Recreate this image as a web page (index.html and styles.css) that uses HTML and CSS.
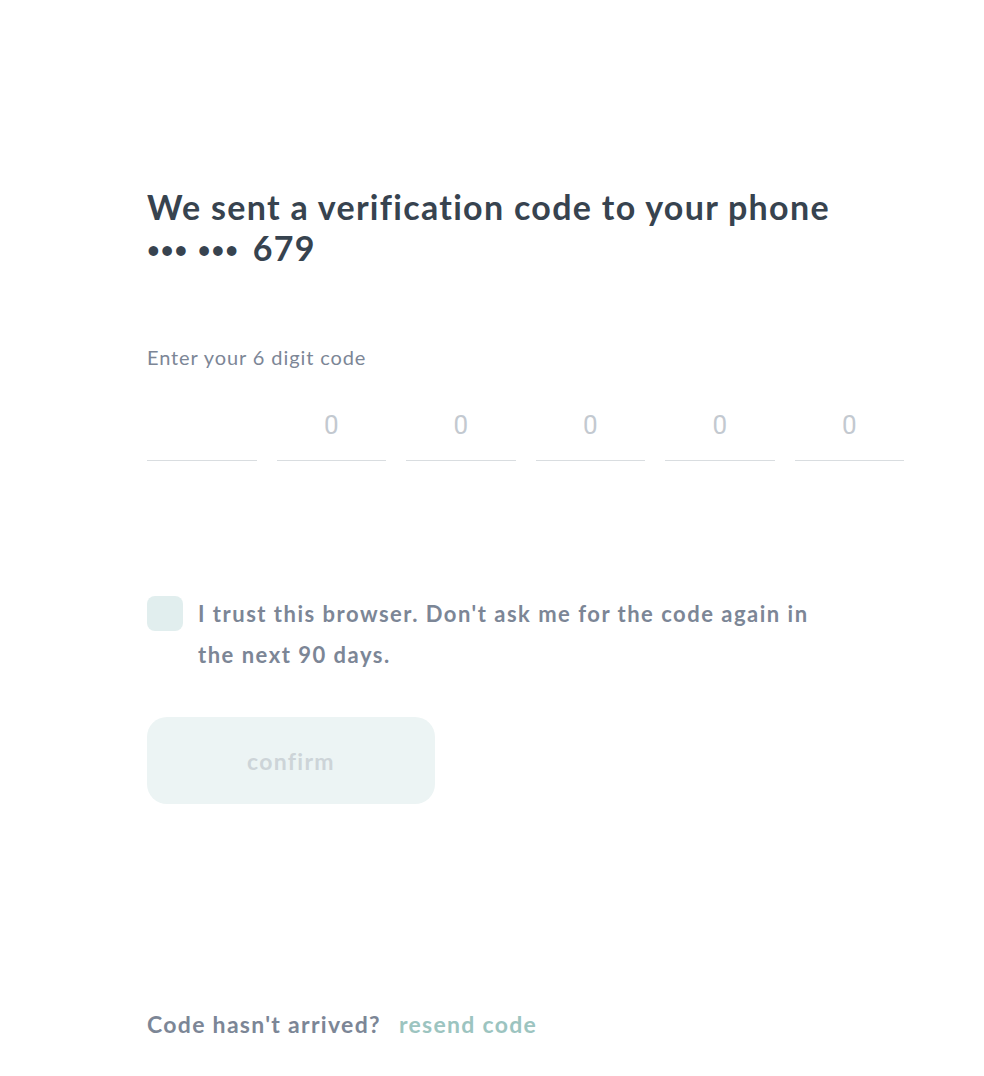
FILE: index.html
```html
<!DOCTYPE html>
<html lang="en">
<head>
<meta charset="utf-8">
<title>Verify</title>
<link rel="stylesheet" href="styles.css">
</head>
<body>
<main class="page">
  <h1 class="title">We sent a verification code to your phone<br><span class="dots">•••</span> <span class="dots">•••</span> <span class="last">679</span></h1>
  <label class="label">Enter your 6 digit code</label>
  <div class="code">
    <div class="cell"></div>
    <div class="cell">0</div>
    <div class="cell">0</div>
    <div class="cell">0</div>
    <div class="cell">0</div>
    <div class="cell">0</div>
  </div>
  <div class="trust">
    <span class="box"></span>
    <span class="trust-text">I trust this browser. Don't ask me for the code again in the next 90 days.</span>
  </div>
  <button class="confirm">confirm</button>
  <div class="footer">
    <span class="q">Code hasn't arrived?</span>
    <a class="resend">resend code</a>
  </div>
</main>
</body>
</html>
```

FILE: styles.css
```css
html, body {
  margin: 0;
  padding: 0;
  background: #ffffff;
}
body {
  font-family: "Lato", "Nunito Sans", sans-serif;
}
.page {
  width: 757px;
  padding: 186px 0 0 147px;
  display: flex;
  flex-direction: column;
}
.title {
  margin: 0;
  font-size: 34px;
  line-height: 41px;
  font-weight: 700;
  letter-spacing: 1.3px;
  color: #37434f;
}
.dots {
  font-size: 22px;
  letter-spacing: 1px;
  vertical-align: 3px;
}
.last {
  margin-left: 4px;
}
.label {
  margin-top: 75px;
  font-size: 20px;
  line-height: 24px;
  letter-spacing: 0.9px;
  color: #7c8696;
}
.code {
  margin-top: 31px;
  display: grid;
  grid-template-columns: repeat(6, 1fr);
  column-gap: 20px;
}
.cell {
  height: 50px;
  padding-bottom: 10px;
  border-bottom: 1px solid #d9dde0;
  display: flex;
  align-items: center;
  justify-content: center;
  font-family: "Roboto", sans-serif;
  font-size: 26px;
  color: #c3c9d0;
}
.trust {
  margin-top: 135px;
  display: flex;
  align-items: flex-start;
  gap: 15px;
}
.box {
  flex: none;
  width: 36px;
  height: 35px;
  border-radius: 8px;
  background: #e1eeee;
}
.trust-text {
  width: 650px;
  font-size: 22px;
  line-height: 41px;
  font-weight: 700;
  letter-spacing: 1.5px;
  color: #7c8696;
  margin-top: -3px;
}
.confirm {
  margin-top: 42px;
  width: 288px;
  height: 87px;
  border: none;
  border-radius: 20px;
  background: #ecf4f4;
  color: #cdd4d8;
  font-family: inherit;
  font-size: 23px;
  font-weight: 700;
  letter-spacing: 1.3px;
}
.footer {
  margin-top: 206px;
  display: flex;
  gap: 18px;
  font-size: 23px;
  line-height: 28px;
  font-weight: 700;
  letter-spacing: 1.3px;
}
.q {
  color: #7c8696;
}
.resend {
  color: #9cc4c0;
}
```
